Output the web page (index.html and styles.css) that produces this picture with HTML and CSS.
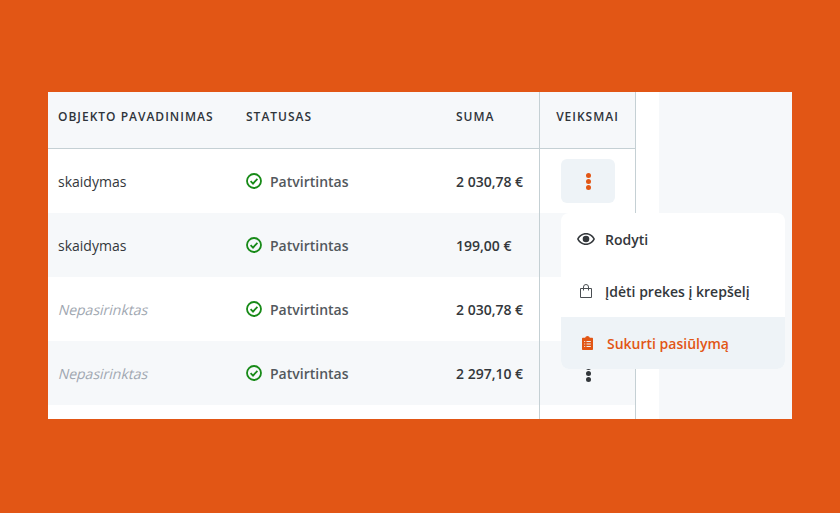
FILE: index.html
```html
<!DOCTYPE html>
<html lang="lt">
<head>
    <title>Objektai</title>
    <meta charset="UTF-8">
    <meta name="viewport" content="width=device-width, initial-scale=1.0">
    <link rel="stylesheet" href="styles.css">
</head>
<body>
    <div class="panel">
        <table class="objects">
            <thead>
                <tr>
                    <th class="col-name">Objekto pavadinimas</th>
                    <th class="col-status">Statusas</th>
                    <th class="col-sum">Suma</th>
                    <th class="col-actions">Veiksmai</th>
                </tr>
            </thead>
            <tbody>
                <tr>
                    <td>skaidymas</td>
                    <td><span class="status"><svg class="check" viewBox="0 0 16 16"><circle cx="8" cy="8" r="7"/><path d="M4.6 8.200l2.400 2.400 4.400-4.800"/></svg>Patvirtintas</span></td>
                    <td class="sum">2 030,78 €</td>
                    <td class="actions"><button class="dots open"><i></i><i></i><i></i></button></td>
                </tr>
                <tr class="alt">
                    <td>skaidymas</td>
                    <td><span class="status"><svg class="check" viewBox="0 0 16 16"><circle cx="8" cy="8" r="7"/><path d="M4.6 8.200l2.400 2.400 4.400-4.800"/></svg>Patvirtintas</span></td>
                    <td class="sum">199,00 €</td>
                    <td class="actions"><button class="dots"><i></i><i></i><i></i></button></td>
                </tr>
                <tr>
                    <td><span class="empty">Nepasirinktas</span></td>
                    <td><span class="status"><svg class="check" viewBox="0 0 16 16"><circle cx="8" cy="8" r="7"/><path d="M4.6 8.200l2.400 2.400 4.400-4.800"/></svg>Patvirtintas</span></td>
                    <td class="sum">2 030,78 €</td>
                    <td class="actions"><button class="dots"><i></i><i></i><i></i></button></td>
                </tr>
                <tr class="alt">
                    <td><span class="empty">Nepasirinktas</span></td>
                    <td><span class="status"><svg class="check" viewBox="0 0 16 16"><circle cx="8" cy="8" r="7"/><path d="M4.6 8.200l2.400 2.400 4.400-4.800"/></svg>Patvirtintas</span></td>
                    <td class="sum">2 297,10 €</td>
                    <td class="actions"><button class="dots"><i></i><i></i><i></i></button></td>
                </tr>
                <tr class="filler">
                    <td></td>
                    <td></td>
                    <td></td>
                    <td class="actions"></td>
                </tr>
            </tbody>
        </table>
        <div class="gap"></div>
        <div class="side"></div>

        <ul class="menu">
            <li class="menu-item">
                <svg class="menu-icon" viewBox="0 0 18 12"><path class="eye" fill-rule="evenodd" d="M9 0C5 0 1.600 2.400 0 6c1.600 3.600 5 6 9 6s7.400-2.400 9-6c-1.600-3.600-5-6-9-6zm0 1.500c3.100 0 5.900 1.800 7.300 4.500-1.400 2.700-4.200 4.500-7.300 4.500S3.100 8.700 1.700 6C3.100 3.300 5.900 1.500 9 1.500z"/><circle class="eye" cx="9" cy="6" r="3.300"/></svg>
                Rodyti
            </li>
            <li class="menu-item">
                <svg class="menu-icon bag" viewBox="0 0 12 14"><path d="M.5 4.500h11v9H.5zM3.500 6.500V3a2.500 2.500 0 0 1 5 0v3.500"/></svg>
                Įdėti prekes į krepšelį
            </li>
            <li class="menu-item active">
                <svg class="menu-icon clip" viewBox="0 0 11 14"><path class="clip-body" d="M1 1.800h2.200C3.500.7 4.400 0 5.500 0s2 .7 2.300 1.800H10c.6 0 1 .4 1 1V13c0 .6-.4 1-1 1H1c-.6 0-1-.4-1-1V2.800c0-.6.4-1 1-1z"/><path class="clip-lines" d="M2.200 5.500h1M4.500 5.500h4.300M2.200 8h1M4.500 8h4.300M2.200 10.500h1M4.500 10.500h4.300"/></svg>
                Sukurti pasiūlymą
            </li>
        </ul>
    </div>
</body>
</html>
```

FILE: styles.css
```css
body {
    margin: 0;
    height: 513px;
    padding: 92px 48px 94px;
    box-sizing: border-box;
    background: #e25615;
    font-family: 'Open Sans', sans-serif;
    font-size: 14px;
    color: #33373b;
    overflow: hidden;
}
.panel {
    position: relative;
    display: flex;
    height: 327px;
    background: #fff;
}
.objects {
    width: 588px;
    height: 327px;
    flex: none;
    border-collapse: separate;
    border-spacing: 0;
    table-layout: fixed;
}
.gap {
    width: 23px;
    flex: none;
}
.side {
    flex: 1;
    background: #f6f8fa;
}
th {
    height: 57px;
    padding: 0 0 8px 10px;
    box-sizing: border-box;
    background: #f6f8fa;
    border-bottom: 1px solid #c5d0d4;
    font-size: 12px;
    font-weight: 600;
    letter-spacing: 1px;
    text-align: left;
    text-transform: uppercase;
    color: #2f343a;
}
th.col-name { width: 188px; }
th.col-status { width: 220px; }
th.col-sum { width: 83px; padding-left: 0; }
th.col-actions {
    padding: 0 0 8px;
    text-align: center;
    border-left: 1px solid #c5d0d4;
    border-right: 1px solid #c5d0d4;
}
td {
    height: 64px;
    padding: 0 0 0 10px;
    box-sizing: border-box;
}
.alt td { background: #f6f8fa; }
.filler td { height: 14px; }
td.sum {
    padding-left: 0;
    font-weight: 600;
}
td.actions {
    padding: 0;
    border-left: 1px solid #c5d0d4;
    border-right: 1px solid #c5d0d4;
}
/* upright face slanted: the real italic is narrower than the design */
.empty {
    display: inline-block;
    margin-left: 1px;
    transform: skewX(-14deg);
    color: #a0a7b1;
}
.status {
    display: flex;
    align-items: center;
    gap: 8px;
    font-weight: 600;
    color: #53585d;
}
.check {
    width: 16px;
    height: 16px;
    fill: none;
    stroke: #178a17;
    stroke-width: 1.800;
}
.dots {
    display: flex;
    flex-direction: column;
    align-items: center;
    justify-content: center;
    gap: 1px;
    width: 54px;
    height: 44px;
    margin-left: 21px;
    padding: 0;
    border: none;
    border-radius: 6px;
    background: transparent;
}
.dots i {
    width: 5px;
    height: 5px;
    border-radius: 50%;
    background: #33373b;
}
.dots.open { background: #eef3f7; }
.dots.open i { background: #e25615; }
.menu {
    position: absolute;
    left: 513px;
    top: 121px;
    width: 224px;
    margin: 0;
    padding: 0;
    list-style: none;
    background: #fff;
    border-radius: 8px;
    overflow: hidden;
}
.menu-item {
    display: flex;
    align-items: center;
    height: 52px;
    padding-left: 16px;
    font-weight: 600;
    color: #33373b;
}
.menu-item.active {
    background: #eef3f7;
    color: #e25615;
}
.menu-icon {
    flex: none;
    width: 18px;
    height: 12px;
    margin-right: 10px;
}
.eye { fill: #33373b; }
.bag {
    width: 12px;
    height: 14px;
    margin: 0 13px 0 3px;
    fill: none;
    stroke: #4a4e52;
    stroke-width: 1;
}
.clip {
    width: 11px;
    height: 14px;
    margin: 0 14px 0 5px;
}
.clip-body { fill: #e25615; }
.clip-lines {
    fill: none;
    stroke: #eef3f7;
    stroke-width: 1;
}
```
